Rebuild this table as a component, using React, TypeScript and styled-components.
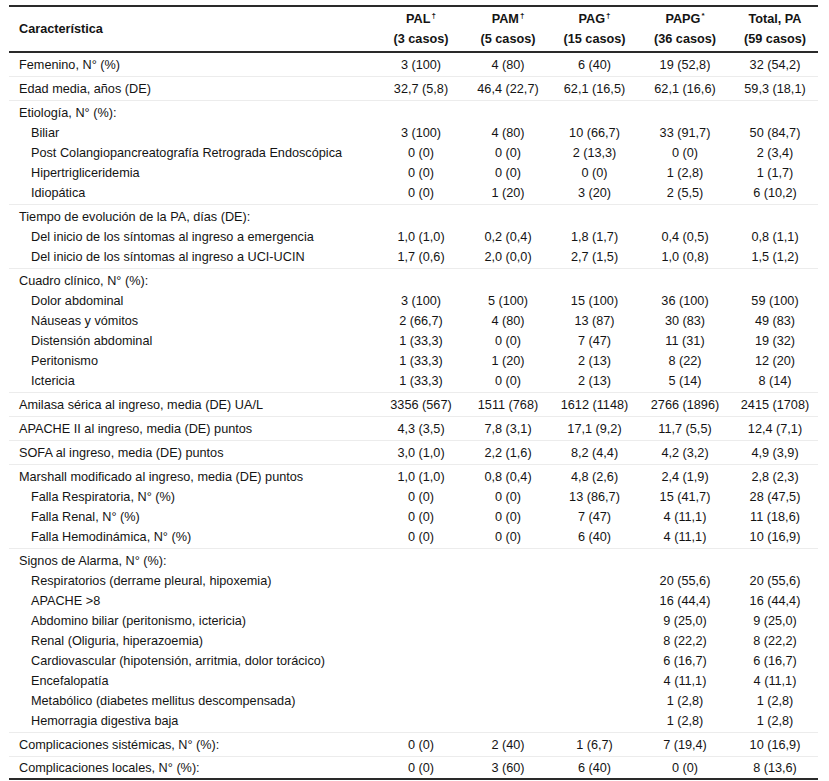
import React, { FC } from 'react';
import styled, { createGlobalStyle } from 'styled-components';

const GlobalStyle = createGlobalStyle`
    html, body {
        margin: 0;
        padding: 0;
        background: #ffffff;
    }
    body {
        font-family: "Liberation Sans", Arial, sans-serif;
        color: #141414;
    }
`;

const COLS = '368px 88px 86px 87px 94px 86px';

const TableWrap = styled.div`
    width: 809px;
    margin: 5px 0 0 9px;
    border-top: 2px solid #2a2a2a;
    border-bottom: 2px solid #2a2a2a;
    font-size: 12.7px;
`;

const HeadRow = styled.div`
    display: grid;
    grid-template-columns: ${COLS};
    align-items: center;
    padding: 2px 0;
    border-bottom: 2px solid #2a2a2a;
    font-weight: bold;
    line-height: 20px;
`;

const HeadLabel = styled.div`
    padding-left: 10px;
`;

const HeadCol = styled.div`
    text-align: center;
    white-space: nowrap;
`;

const Mark = styled.sup`
    font-size: 8px;
    line-height: 0;
    vertical-align: 5px;
    margin-left: 1px;
`;

const Block = styled.div<{ $last?: boolean }>`
    padding: ${({ $last }) => ($last ? '1px 0 0' : '2px 0 1px')};
    border-bottom: ${({ $last }) => ($last ? 'none' : '1px solid #ececec')};
`;

const Row = styled.div`
    display: grid;
    grid-template-columns: ${COLS};
    height: 20px;
    line-height: 20px;
    white-space: nowrap;
`;

const Label = styled.div<{ $indent?: boolean }>`
    padding-left: ${({ $indent }) => ($indent ? '22px' : '10px')};
`;

const Value = styled.div`
    text-align: center;
`;

type Line = {
    label: string;
    values?: string[];
    indent?: boolean;
};

const blank = ['', '', ''];

const blocks: Line[][] = [
    [{ label: 'Femenino, N° (%)', values: ['3 (100)', '4 (80)', '6 (40)', '19 (52,8)', '32 (54,2)'] }],
    [{ label: 'Edad media, años (DE)', values: ['32,7 (5,8)', '46,4 (22,7)', '62,1 (16,5)', '62,1 (16,6)', '59,3 (18,1)'] }],
    [
        { label: 'Etiología, N° (%):' },
        { label: 'Biliar', indent: true, values: ['3 (100)', '4 (80)', '10 (66,7)', '33 (91,7)', '50 (84,7)'] },
        { label: 'Post Colangiopancreatografía Retrograda Endoscópica', indent: true, values: ['0 (0)', '0 (0)', '2 (13,3)', '0 (0)', '2 (3,4)'] },
        { label: 'Hipertrigliceridemia', indent: true, values: ['0 (0)', '0 (0)', '0 (0)', '1 (2,8)', '1 (1,7)'] },
        { label: 'Idiopática', indent: true, values: ['0 (0)', '1 (20)', '3 (20)', '2 (5,5)', '6 (10,2)'] },
    ],
    [
        { label: 'Tiempo de evolución de la PA, días (DE):' },
        { label: 'Del inicio de los síntomas al ingreso a emergencia', indent: true, values: ['1,0 (1,0)', '0,2 (0,4)', '1,8 (1,7)', '0,4 (0,5)', '0,8 (1,1)'] },
        { label: 'Del inicio de los síntomas al ingreso a UCI-UCIN', indent: true, values: ['1,7 (0,6)', '2,0 (0,0)', '2,7 (1,5)', '1,0 (0,8)', '1,5 (1,2)'] },
    ],
    [
        { label: 'Cuadro clínico, N° (%):' },
        { label: 'Dolor abdominal', indent: true, values: ['3 (100)', '5 (100)', '15 (100)', '36 (100)', '59 (100)'] },
        { label: 'Náuseas y vómitos', indent: true, values: ['2 (66,7)', '4 (80)', '13 (87)', '30 (83)', '49 (83)'] },
        { label: 'Distensión abdominal', indent: true, values: ['1 (33,3)', '0 (0)', '7 (47)', '11 (31)', '19 (32)'] },
        { label: 'Peritonismo', indent: true, values: ['1 (33,3)', '1 (20)', '2 (13)', '8 (22)', '12 (20)'] },
        { label: 'Ictericia', indent: true, values: ['1 (33,3)', '0 (0)', '2 (13)', '5 (14)', '8 (14)'] },
    ],
    [{ label: 'Amilasa sérica al ingreso, media (DE) UA/L', values: ['3356 (567)', '1511 (768)', '1612 (1148)', '2766 (1896)', '2415 (1708)'] }],
    [{ label: 'APACHE II al ingreso, media (DE) puntos', values: ['4,3 (3,5)', '7,8 (3,1)', '17,1 (9,2)', '11,7 (5,5)', '12,4 (7,1)'] }],
    [{ label: 'SOFA al ingreso, media (DE) puntos', values: ['3,0 (1,0)', '2,2 (1,6)', '8,2 (4,4)', '4,2 (3,2)', '4,9 (3,9)'] }],
    [
        { label: 'Marshall modificado al ingreso, media (DE) puntos', values: ['1,0 (1,0)', '0,8 (0,4)', '4,8 (2,6)', '2,4 (1,9)', '2,8 (2,3)'] },
        { label: 'Falla Respiratoria, N° (%)', indent: true, values: ['0 (0)', '0 (0)', '13 (86,7)', '15 (41,7)', '28 (47,5)'] },
        { label: 'Falla Renal, N° (%)', indent: true, values: ['0 (0)', '0 (0)', '7 (47)', '4 (11,1)', '11 (18,6)'] },
        { label: 'Falla Hemodinámica, N° (%)', indent: true, values: ['0 (0)', '0 (0)', '6 (40)', '4 (11,1)', '10 (16,9)'] },
    ],
    [
        { label: 'Signos de Alarma, N° (%):' },
        { label: 'Respiratorios (derrame pleural, hipoxemia)', indent: true, values: [...blank, '20 (55,6)', '20 (55,6)'] },
        { label: 'APACHE >8', indent: true, values: [...blank, '16 (44,4)', '16 (44,4)'] },
        { label: 'Abdomino biliar (peritonismo, ictericia)', indent: true, values: [...blank, '9 (25,0)', '9 (25,0)'] },
        { label: 'Renal (Oliguria, hiperazoemia)', indent: true, values: [...blank, '8 (22,2)', '8 (22,2)'] },
        { label: 'Cardiovascular (hipotensión, arritmia, dolor torácico)', indent: true, values: [...blank, '6 (16,7)', '6 (16,7)'] },
        { label: 'Encefalopatía', indent: true, values: [...blank, '4 (11,1)', '4 (11,1)'] },
        { label: 'Metabólico (diabetes mellitus descompensada)', indent: true, values: [...blank, '1 (2,8)', '1 (2,8)'] },
        { label: 'Hemorragia digestiva baja', indent: true, values: [...blank, '1 (2,8)', '1 (2,8)'] },
    ],
    [{ label: 'Complicaciones sistémicas, N° (%):', values: ['0 (0)', '2 (40)', '1 (6,7)', '7 (19,4)', '10 (16,9)'] }],
    [{ label: 'Complicaciones locales, N° (%):', values: ['0 (0)', '3 (60)', '6 (40)', '0 (0)', '8 (13,6)'] }],
];

const headers: { name: string; mark: string; cases: string }[] = [
    { name: 'PAL', mark: '†', cases: '(3 casos)' },
    { name: 'PAM', mark: '†', cases: '(5 casos)' },
    { name: 'PAG', mark: '†', cases: '(15 casos)' },
    { name: 'PAPG', mark: '*', cases: '(36 casos)' },
    { name: 'Total, PA', mark: '', cases: '(59 casos)' },
];

const App: FC = () => {
    return (
        <>
            <GlobalStyle />
            <TableWrap>
                <HeadRow>
                    <HeadLabel>Característica</HeadLabel>
                    {headers.map((h) => (
                        <HeadCol key={h.name}>
                            {h.name}
                            {h.mark && <Mark>{h.mark}</Mark>}
                            <br />
                            {h.cases}
                        </HeadCol>
                    ))}
                </HeadRow>
                {blocks.map((lines, i) => (
                    <Block key={i} $last={i === blocks.length - 1}>
                        {lines.map((l) => (
                            <Row key={l.label}>
                                <Label $indent={l.indent}>{l.label}</Label>
                                {(l.values ?? []).map((v, j) => (
                                    <Value key={j}>{v}</Value>
                                ))}
                            </Row>
                        ))}
                    </Block>
                ))}
            </TableWrap>
        </>
    );
};

export default App;
